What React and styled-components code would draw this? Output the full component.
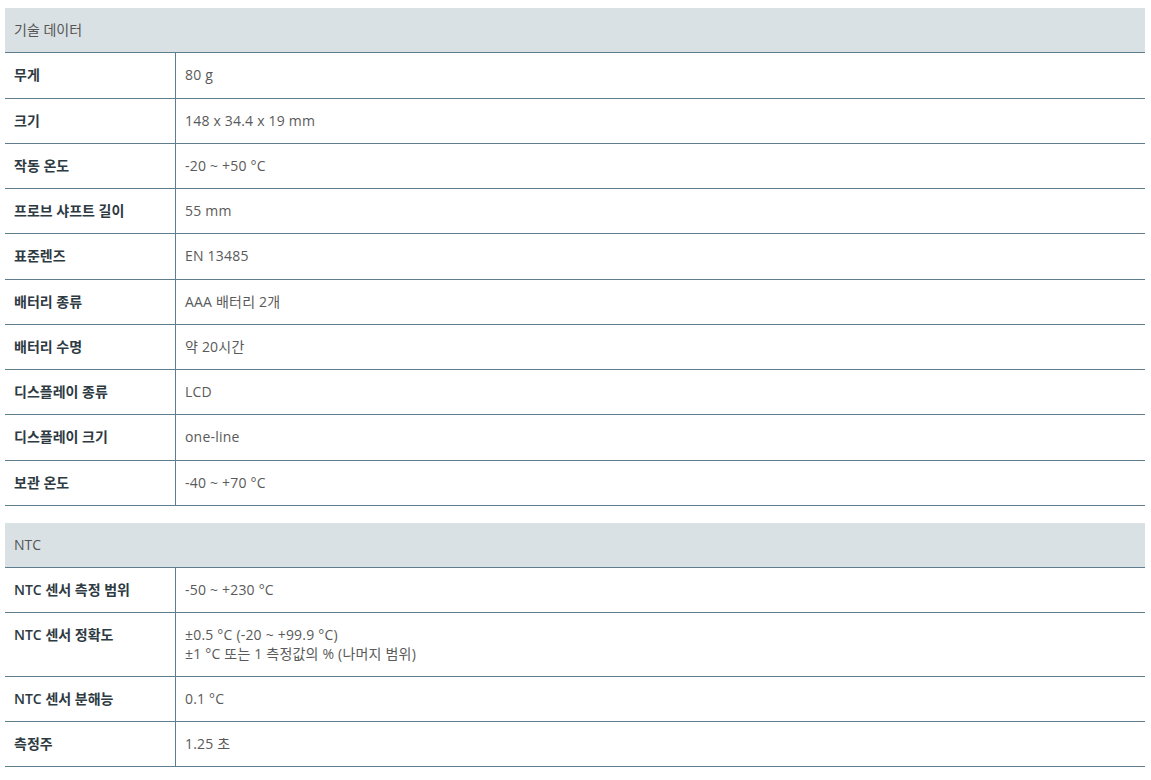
import React from 'react'
import styled, { createGlobalStyle } from 'styled-components';

const GlobalStyle = createGlobalStyle`
  body {
    margin: 0;
    background: #fff;
    font-family: 'Open Sans', 'Noto Sans CJK KR', sans-serif;
  }
`;

const Page = styled.div`
  padding: 8px 6px 0 5px;
  display: flex;
  flex-direction: column;
  gap: 17px;
`;

const Table = styled.table`
  width: 100%;
  border-collapse: collapse;
  font-size: 14px;
  line-height: 18.25px;

  th {
    background: #d9e1e4;
    color: #555;
    font-weight: 400;
    text-align: left;
    padding: 13px 9px;
    border-bottom: 1px solid #5e7d8e;
  }

  td {
    padding: 13px 10px 13px 9px;
    border-bottom: 1px solid #5e7d8e;
    vertical-align: top;
  }

  td.label {
    width: 151px;
    color: #2e3a42;
    font-weight: 600;
    border-right: 1px solid #5e7d8e;
  }

  td.value {
    color: #5a5a5a;
    font-weight: 400;
    letter-spacing: 0.2px;
  }
`;

const Spec = ({ title, rows }) => (
  <Table>
    <thead>
      <tr><th colSpan={2}>{title}</th></tr>
    </thead>
    <tbody>
      {rows.map(([label, value], i) => (
        <tr key={`row-${i}`}>
          <td className='label'>{label}</td>
          <td className='value'>
            {value.map((line, j) => <div key={j}>{line}</div>)}
          </td>
        </tr>
      ))}
    </tbody>
  </Table>
);

const tech = [
  ['무게', ['80 g']],
  ['크기', ['148 x 34.4 x 19 mm']],
  ['작동 온도', ['-20 ~ +50 °C']],
  ['프로브 샤프트 길이', ['55 mm']],
  ['표준렌즈', ['EN 13485']],
  ['배터리 종류', ['AAA 배터리 2개']],
  ['배터리 수명', ['약 20시간']],
  ['디스플레이 종류', ['LCD']],
  ['디스플레이 크기', ['one-line']],
  ['보관 온도', ['-40 ~ +70 °C']],
];

const ntc = [
  ['NTC 센서 측정 범위', ['-50 ~ +230 °C']],
  ['NTC 센서 정확도', ['±0.5 °C (-20 ~ +99.9 °C)', '±1 °C 또는 1 측정값의 % (나머지 범위)']],
  ['NTC 센서 분해능', ['0.1 °C']],
  ['측정주', ['1.25 초']],
];

export default function App() {
  return (
    <>
      <GlobalStyle />
      <Page>
        <Spec title='기술 데이터' rows={tech} />
        <Spec title='NTC' rows={ntc} />
      </Page>
    </>
  )
}
